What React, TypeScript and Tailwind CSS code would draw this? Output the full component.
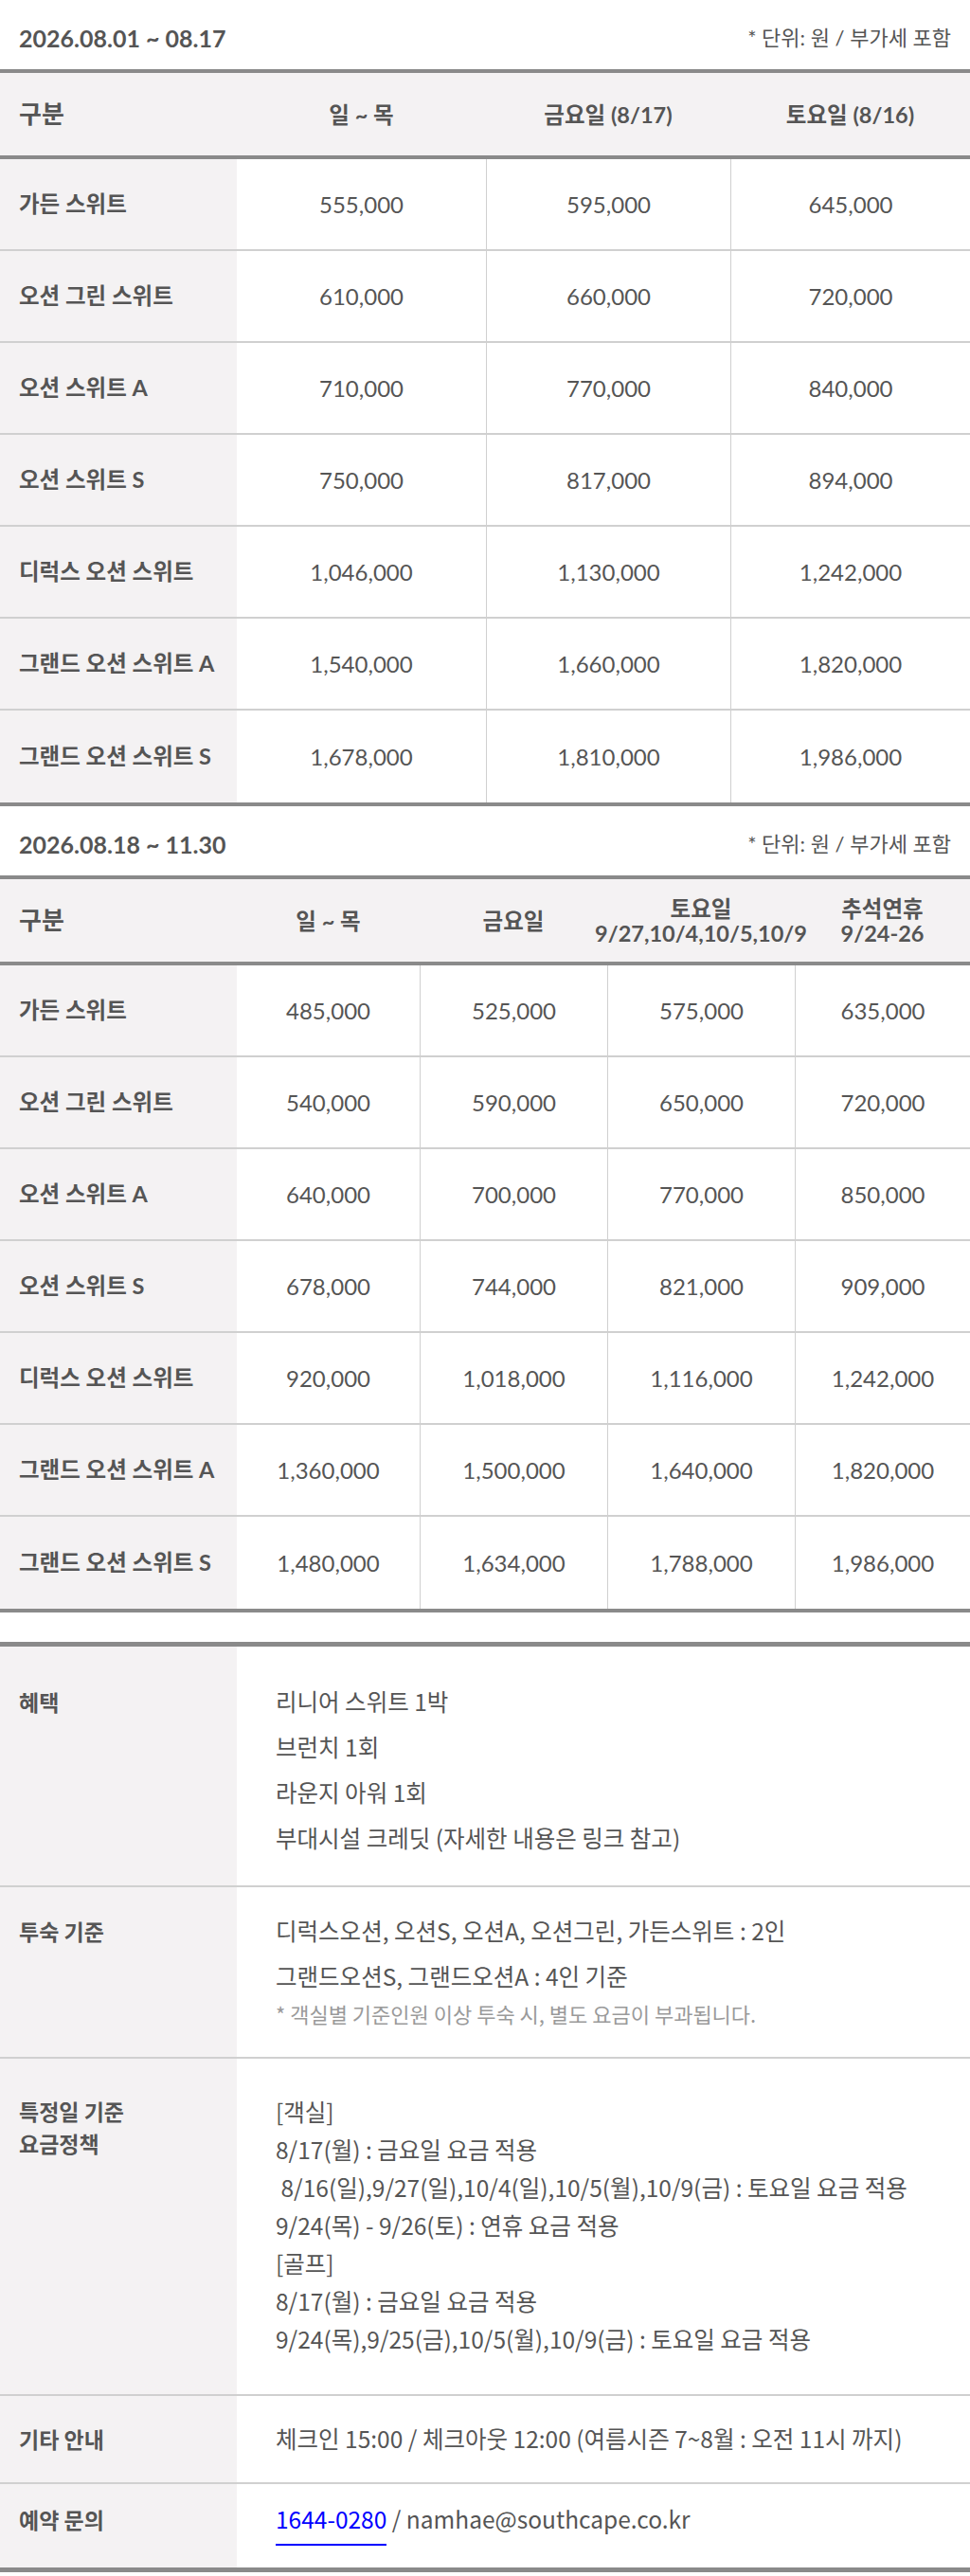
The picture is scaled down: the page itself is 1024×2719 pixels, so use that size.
import React from 'react'

type Row = { name: string; prices: string[] }

const period1: Row[] = [
  { name: '가든 스위트', prices: ['555,000', '595,000', '645,000'] },
  { name: '오션 그린 스위트', prices: ['610,000', '660,000', '720,000'] },
  { name: '오션 스위트 A', prices: ['710,000', '770,000', '840,000'] },
  { name: '오션 스위트 S', prices: ['750,000', '817,000', '894,000'] },
  { name: '디럭스 오션 스위트', prices: ['1,046,000', '1,130,000', '1,242,000'] },
  { name: '그랜드 오션 스위트 A', prices: ['1,540,000', '1,660,000', '1,820,000'] },
  { name: '그랜드 오션 스위트 S', prices: ['1,678,000', '1,810,000', '1,986,000'] },
]

const period2: Row[] = [
  { name: '가든 스위트', prices: ['485,000', '525,000', '575,000', '635,000'] },
  { name: '오션 그린 스위트', prices: ['540,000', '590,000', '650,000', '720,000'] },
  { name: '오션 스위트 A', prices: ['640,000', '700,000', '770,000', '850,000'] },
  { name: '오션 스위트 S', prices: ['678,000', '744,000', '821,000', '909,000'] },
  { name: '디럭스 오션 스위트', prices: ['920,000', '1,018,000', '1,116,000', '1,242,000'] },
  { name: '그랜드 오션 스위트 A', prices: ['1,360,000', '1,500,000', '1,640,000', '1,820,000'] },
  { name: '그랜드 오션 스위트 S', prices: ['1,480,000', '1,634,000', '1,788,000', '1,986,000'] },
]

function PeriodTitle({ range }: { range: string }) {
  return (
    <div className="flex items-center justify-between px-5 pt-[26px] pb-[19px] leading-[28px]">
      <span className="text-[25px] font-bold text-[#555]">{range}</span>
      <span className="text-[22px] text-[#555]">* 단위: 원 / 부가세 포함</span>
    </div>
  )
}

function PriceTable({
  gridCols,
  headers,
  rows,
}: {
  gridCols: string
  headers: React.ReactNode[]
  rows: Row[]
}) {
  return (
    <div className="border-y-4 border-[#8a8a8a]">
      <div className={`grid ${gridCols} h-[91px] bg-[#f4f2f3] border-b-4 border-[#8a8a8a]`}>
        <div className="flex items-center px-5 text-[26px] font-bold text-[#555]">구분</div>
        {headers.map((h, i) => (
          <div
            key={i}
            className="flex items-center justify-center whitespace-nowrap text-center text-[23.5px] font-bold leading-[26px] text-[#555]"
          >
            {h}
          </div>
        ))}
      </div>
      {rows.map((row, r) => (
        <div
          key={row.name}
          className={`grid ${gridCols} h-[97px] ${r < rows.length - 1 ? 'border-b-2 border-[#d0d0d0]' : ''}`}
        >
          <div className="flex items-center bg-[#f4f2f3] px-5 text-[23.5px] font-bold text-[#555]">
            {row.name}
          </div>
          {row.prices.map((p, i) => (
            <div
              key={i}
              className={`flex items-center justify-center text-[24px] text-[#555] ${i > 0 ? 'border-l border-[#d0d0d0]' : ''}`}
            >
              {p}
            </div>
          ))}
        </div>
      ))}
    </div>
  )
}

function InfoRow({
  label,
  labelClass,
  contentClass,
  children,
  last,
}: {
  label: React.ReactNode
  labelClass: string
  contentClass: string
  children: React.ReactNode
  last?: boolean
}) {
  return (
    <div className={`flex ${last ? '' : 'border-b-2 border-[#d0d0d0]'}`}>
      <div className={`w-[250px] shrink-0 bg-[#f4f2f3] pl-5 text-[23px] font-bold text-[#555] ${labelClass}`}>
        {label}
      </div>
      <div className={`flex-1 pl-[41px] text-[24.5px] text-[#555] ${contentClass}`}>{children}</div>
    </div>
  )
}

export default function App() {
  return (
    <div className="w-[1024px] bg-white font-[Lato,'Noto_Sans_CJK_KR',sans-serif]">
      <PeriodTitle range="2026.08.01 ~ 08.17" />
      <PriceTable
        gridCols="grid-cols-[250px_263px_258px_253px]"
        headers={['일 ~ 목', '금요일 (8/17)', '토요일 (8/16)']}
        rows={period1}
      />

      <PeriodTitle range="2026.08.18 ~ 11.30" />
      <PriceTable
        gridCols="grid-cols-[250px_193px_198px_198px_185px]"
        headers={[
          '일 ~ 목',
          '금요일',
          <>
            토요일
            <br />
            9/27,10/4,10/5,10/9
          </>,
          <>
            추석연휴
            <br />
            9/24-26
          </>,
        ]}
        rows={period2}
      />

      <div className="mt-[31px] border-y-[5px] border-[#8a8a8a] font-['Noto_Sans_CJK_KR',sans-serif]">
        <InfoRow label="혜택" labelClass="pt-[34px] leading-[48px]" contentClass="pt-[34px] pb-[26px] leading-[48px]">
          <p>리니어 스위트 1박</p>
          <p>브런치 1회</p>
          <p>라운지 아워 1회</p>
          <p>부대시설 크레딧 (자세한 내용은 링크 참고)</p>
        </InfoRow>

        <InfoRow label="투숙 기준" labelClass="pt-[22px] leading-[48px]" contentClass="pt-[22px] pb-[31px] leading-[48px]">
          <p>디럭스오션, 오션S, 오션A, 오션그린, 가든스위트 : 2인</p>
          <p>그랜드오션S, 그랜드오션A : 4인 기준</p>
          <p className="text-[22px] leading-[30px] text-[#9a9a9a]">* 객실별 기준인원 이상 투숙 시, 별도 요금이 부과됩니다.</p>
        </InfoRow>

        <InfoRow
          label={
            <>
              특정일 기준
              <br />
              요금정책
            </>
          }
          labelClass="pt-[38px] leading-[34px]"
          contentClass="pt-[36px] pb-[38px] leading-[40px]"
        >
          [객실]
          <br />
          8/17(월) : 금요일 요금 적용
          <br />
          {'\u00a08/16(일),9/27(일),10/4(일),10/5(월),10/9(금) : 토요일 요금 적용'}
          <br />
          9/24(목) - 9/26(토) : 연휴 요금 적용
          <br />
          [골프]
          <br />
          8/17(월) : 금요일 요금 적용
          <br />
          9/24(목),9/25(금),10/5(월),10/9(금) : 토요일 요금 적용
        </InfoRow>

        <InfoRow label="기타 안내" labelClass="pt-[28px] leading-[34px]" contentClass="pt-[28px] pb-[29px] leading-[34px]">
          체크인 15:00 / 체크아웃 12:00 (여름시즌 7~8월 : 오전 11시 까지)
        </InfoRow>

        <InfoRow
          label="예약 문의"
          labelClass="pt-[20px] leading-[34px]"
          contentClass="h-[88px] pt-[20px] leading-[34px]"
          last
        >
          <a href="#" className="inline-block border-b-2 border-[#0000ff] pb-[9px] leading-[34px] text-[#0000ff]">
            1644-0280
          </a>{' '}
          / namhae@southcape.co.kr
        </InfoRow>
      </div>
    </div>
  )
}
